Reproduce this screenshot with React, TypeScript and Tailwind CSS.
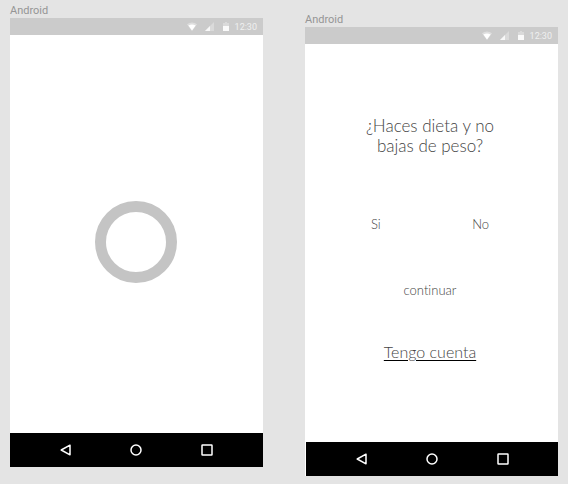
import type { ReactNode } from "react";

function StatusBar() {
  return (
    <div className="flex h-[17px] shrink-0 items-center justify-end bg-[#cbcbcb] pr-[6px] text-[#f0f0f0]">
      <svg className="mr-[8px] h-[9px] w-[10px]" viewBox="0 0 10 9" aria-hidden="true">
        <path d="M0 2.2Q5-1.2 10 2.2L5 9Z" fill="#dedede" />
        <path d="M1.4 3.4Q5 1.4 8.6 3.4L5 8.6Z" fill="#ffffff" />
      </svg>
      <svg className="mr-[9px] h-[9px] w-[9px]" viewBox="0 0 9 9" aria-hidden="true">
        <path d="M9 0V9H0Z" fill="#dadada" />
        <path d="M5 4V9H0Z" fill="#f8f8f8" />
      </svg>
      <svg className="mr-[6px] h-[9px] w-[6px]" viewBox="0 0 6 9" aria-hidden="true">
        <path d="M0 1H2V0H4V1H6V4H0Z" fill="#dadada" />
        <path d="M0 4H6V9H0Z" fill="#fafafa" />
      </svg>
      <span className="pt-px font-[Roboto,sans-serif] text-[9px] leading-4 antialiased">12:30</span>
    </div>
  );
}

function NavBar({ className = "" }: { className?: string }) {
  const button = "flex h-5 w-5 items-center justify-center";
  const icon = "h-[12px] w-[12px] fill-none stroke-white stroke-[1.5]";
  return (
    <nav className={`flex h-[34px] shrink-0 items-center justify-center gap-[51px] bg-black ${className}`}>
      <button type="button" aria-label="Atrás" className={button}>
        <svg className={icon} viewBox="0 0 12 12">
          <path d="M11 1.2V10.8L2.2 6Z" strokeLinejoin="round" />
        </svg>
      </button>
      <button type="button" aria-label="Inicio" className={button}>
        <svg className={icon} viewBox="0 0 12 12">
          <circle cx="6" cy="6" r="5" />
        </svg>
      </button>
      <button type="button" aria-label="Recientes" className={button}>
        <svg className={icon} viewBox="0 0 12 12">
          <rect x="1" y="1" width="10" height="10" rx="0.5" />
        </svg>
      </button>
    </nav>
  );
}

function Artboard({ className, navClassName, children }: { className: string; navClassName?: string; children: ReactNode }) {
  return (
    <section className={`min-w-0 flex-1 ${className}`}>
      <h2 className="font-[Roboto,sans-serif] text-[11px] leading-[14px] text-[#959595]">Android</h2>
      <div className="flex aspect-[253/449] flex-col bg-white">
        <StatusBar />
        <div className="flex flex-1 flex-col">{children}</div>
        <NavBar className={navClassName} />
      </div>
    </section>
  );
}

export default function App() {
  return (
    <main className="flex min-h-screen items-start gap-[42px] bg-[#e4e4e4] px-[10px]">
      <Artboard className="pt-[4px]" navClassName="pr-px">
        <div className="flex flex-1 items-center justify-center pr-px pt-4">
          <div role="status" aria-label="Cargando" className="h-[82px] w-[82px] rounded-full border-[11px] border-[#c4c4c4]" />
        </div>
      </Artboard>
      <Artboard className="pt-[13px]" navClassName="ml-px">
        <div className="flex flex-col items-center pr-[3px] pt-[72px] font-[Lato,sans-serif] font-light text-[#444444] antialiased [font-variant-ligatures:none]">
          <h1 className="text-center text-[17px] leading-5">
            ¿Haces dieta y no
            <br />
            bajas de peso?
          </h1>
          <div className="mt-[58px] flex w-full justify-between px-[66px] text-[13px] leading-5">
            <button type="button">Si</button>
            <button type="button">No</button>
          </div>
          <button type="button" className="mt-[46px] text-[13px] leading-5">
            continuar
          </button>
          <a href="#cuenta" className="mt-[42px] text-[16px] leading-5 underline decoration-black underline-offset-2">
            Tengo cuenta
          </a>
        </div>
      </Artboard>
    </main>
  );
}
